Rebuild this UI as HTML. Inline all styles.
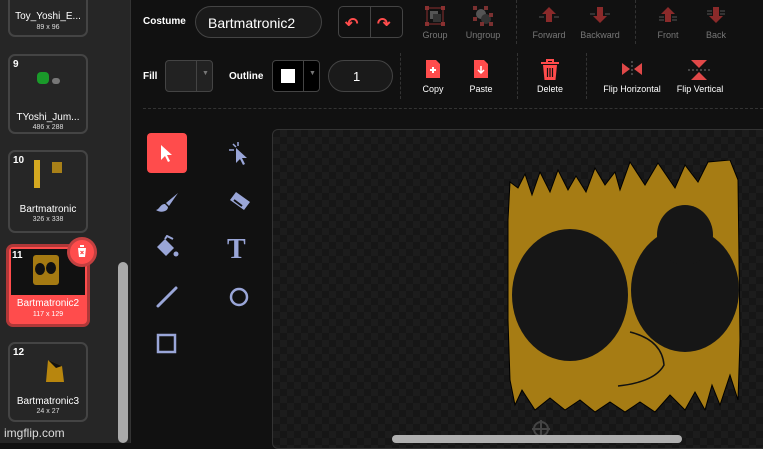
<!DOCTYPE html>
<html><head><meta charset="utf-8"><style>
*{margin:0;padding:0;box-sizing:border-box}
body{width:763px;height:443px;overflow:hidden;background:#111;font-family:"Liberation Sans",sans-serif;position:relative;color:#fff}
.abs{position:absolute}
#side{left:0;top:0;width:131px;height:443px;background:#262626;border-right:1px solid #333}
.card{position:absolute;left:8px;width:80px;border:2px solid #444;border-radius:7px;background:#262626}
.card .n{position:absolute;left:3px;top:3px;font-size:10px;font-weight:bold}
.card .t{position:absolute;width:100%;text-align:center;font-size:10px}
.card .s{position:absolute;width:100%;text-align:center;font-size:7px;color:#ddd}
.lbl{font-size:10px;font-weight:bold;color:#fff}
.btxt{font-size:9px;color:#777;text-align:center;width:60px}
.wtxt{font-size:9px;color:#fff;text-align:center;width:80px}
.vd{border-left:1px dashed #333;width:0}
.checker{background-color:#161616;background-image:linear-gradient(45deg,#1c1c1c 25%,transparent 25%,transparent 75%,#1c1c1c 75%),linear-gradient(45deg,#1c1c1c 25%,transparent 25%,transparent 75%,#1c1c1c 75%);background-size:14px 14px;background-position:0 0,7px 7px}
</style></head><body>
<div id="side" class="abs">
  <div class="card" style="top:-10px;height:47px"><div class="t" style="top:19px">Toy_Yoshi_E...</div><div class="s" style="top:32px">89 x 96</div></div>
  <div class="card" style="top:54px;height:80px"><div class="n">9</div>
    <div class="abs" style="left:27px;top:16px;width:12px;height:12px;background:#1a9a2a;border-radius:4px"></div>
    <div class="abs" style="left:42px;top:22px;width:8px;height:6px;background:#777;border-radius:3px"></div>
    <div class="t" style="top:56px">TYoshi_Jum...</div><div class="s" style="top:68px">486 x 288</div></div>
  <div class="card" style="top:150px;height:83px"><div class="n">10</div>
    <div class="abs" style="left:24px;top:8px;width:6px;height:28px;background:#d4a820"></div>
    <div class="abs" style="left:42px;top:10px;width:10px;height:11px;background:#a88018"></div>
    <div class="t" style="top:52px">Bartmatronic</div><div class="s" style="top:64px">326 x 338</div></div>
  <div class="card" style="top:244px;height:83px;background:#ff4c4c;border:3px solid #b03838;left:6px;width:84px">
    <div class="abs" style="left:2px;top:2px;width:74px;height:46px;background:#111"></div>
    <div class="abs" style="left:24px;top:8px;width:26px;height:30px;background:#a57a12;border-radius:3px"></div>
    <div class="abs" style="left:26px;top:16px;width:10px;height:12px;background:#111;border-radius:50%"></div>
    <div class="abs" style="left:37px;top:15px;width:10px;height:12px;background:#111;border-radius:50%"></div>
    <div class="n">11</div>
    <div class="t" style="top:51px">Bartmatronic2</div><div class="s" style="top:64px;color:#fff">117 x 129</div></div>
  <div class="abs" style="left:67px;top:237px;width:30px;height:30px;border-radius:50%;background:#ff4c4c;border:3px solid #c24040"></div>
  <svg class="abs" style="left:76px;top:244px" width="12" height="14" viewBox="0 0 12 14"><path d="M1 3h10M4 3V1h4v2M2 4h8l-1 9H3z" fill="#fff"/><path d="M4.5 7l3 3M7.5 7l-3 3" stroke="#ff4c4c" stroke-width="1.2"/></svg>
  <div class="card" style="top:342px;height:80px"><div class="n">12</div>
    <svg class="abs" style="left:34px;top:14px" width="22" height="26"><path d="M4 2L18 8L20 24L2 24Z" fill="#b8860e"/><path d="M4 2L18 8L12 10Z" fill="#111"/></svg>
    <div class="t" style="top:52px">Bartmatronic3</div><div class="s" style="top:64px">24 x 27</div></div>
  <div class="abs" style="left:118px;top:262px;width:10px;height:181px;background:#aaa;border-radius:5px"></div>
  <div class="abs" style="left:4px;top:426px;font-size:12px;color:#ddd">imgflip.com</div>
</div>
<div class="abs lbl" style="left:143px;top:16px">Costume</div>
<div class="abs" style="left:195px;top:6px;width:127px;height:32px;border:1px solid #444;border-radius:16px;background:#1a1a1a;font-size:14px;padding:8px 12px">Bartmatronic2</div>
<div class="abs" style="left:338px;top:6px;width:65px;height:32px;border:1px solid #444;border-radius:5px"></div>
<div class="abs" style="left:370px;top:6px;width:1px;height:32px;background:#444"></div>
<div class="abs" style="left:345px;top:14px;color:#ff4c4c;font-size:16px;font-weight:bold">&#x21B6;</div>
<div class="abs" style="left:377px;top:14px;color:#ff4c4c;font-size:16px;font-weight:bold">&#x21B7;</div>
<svg class="abs" style="left:424px;top:5px" width="22" height="22"><rect x="3" y="3" width="16" height="16" fill="none" stroke="#8a3030"/><rect x="6" y="6" width="8" height="8" fill="#555"/><rect x="9" y="9" width="8" height="8" fill="#333"/><g fill="#8a3030"><rect x="1" y="1" width="4" height="4"/><rect x="17" y="1" width="4" height="4"/><rect x="1" y="17" width="4" height="4"/><rect x="17" y="17" width="4" height="4"/></g></svg>
<svg class="abs" style="left:472px;top:5px" width="22" height="22"><circle cx="9" cy="9" r="5" fill="#555"/><circle cx="14" cy="14" r="5" fill="#333"/><g fill="#7a3030"><rect x="1" y="1" width="4" height="4"/><rect x="12" y="1" width="4" height="4"/><rect x="1" y="12" width="4" height="4"/><rect x="17" y="8" width="4" height="4"/><rect x="17" y="17" width="4" height="4"/><rect x="8" y="17" width="4" height="4"/></g></svg>
<div class="abs btxt" style="left:405px;top:30px">Group</div>
<div class="abs btxt" style="left:453px;top:30px">Ungroup</div>
<div class="abs vd" style="left:516px;top:0;height:44px"></div>
<svg class="abs" style="left:538px;top:6px" width="22" height="18"><path d="M11 1L4 8h4v8h6V8h4z" fill="#8a2a2a"/><path d="M1 11h5M16 11h5" stroke="#555"/></svg>
<svg class="abs" style="left:589px;top:6px" width="22" height="18"><path d="M11 17L4 10h4V1h6v9h4z" fill="#8a2a2a"/><path d="M1 8h5M16 8h5" stroke="#555"/></svg>
<div class="abs btxt" style="left:519px;top:30px">Forward</div>
<div class="abs btxt" style="left:570px;top:30px">Backward</div>
<div class="abs vd" style="left:635px;top:0;height:44px"></div>
<svg class="abs" style="left:657px;top:6px" width="22" height="18"><path d="M11 1L4 8h4v8h6V8h4z" fill="#8a2a2a"/><path d="M2 11h5M2 14h5M15 11h5M15 14h5" stroke="#555"/></svg>
<svg class="abs" style="left:705px;top:6px" width="22" height="18"><path d="M11 17L4 10h4V1h6v9h4z" fill="#8a2a2a"/><path d="M2 5h5M2 8h5M15 5h5M15 8h5" stroke="#555"/></svg>
<div class="abs btxt" style="left:638px;top:30px">Front</div>
<div class="abs btxt" style="left:686px;top:30px">Back</div>
<div class="abs lbl" style="left:143px;top:71px">Fill</div>
<div class="abs" style="left:165px;top:60px;width:48px;height:32px;border:1px solid #444;border-radius:4px;background:#222"></div>
<div class="abs" style="left:196px;top:60px;width:1px;height:32px;background:#444"></div>
<div class="abs" style="left:202px;top:70px;font-size:7px;color:#777">▼</div>
<div class="abs lbl" style="left:229px;top:71px">Outline</div>
<div class="abs" style="left:272px;top:60px;width:48px;height:32px;border:1px solid #444;border-radius:4px;background:#000"></div>
<div class="abs" style="left:281px;top:69px;width:14px;height:14px;background:#fff"></div>
<div class="abs" style="left:303px;top:60px;width:1px;height:32px;background:#444"></div>
<div class="abs" style="left:309px;top:70px;font-size:7px;color:#777">▼</div>
<div class="abs" style="left:328px;top:60px;width:65px;height:32px;border:1px solid #444;border-radius:16px;background:#1a1a1a;font-size:13px;padding:8px 0 0 24px">1</div>
<div class="abs vd" style="left:400px;top:53px;height:46px"></div>
<svg class="abs" style="left:425px;top:59px" width="16" height="20"><path d="M1 1h10l4 4v14H1z" fill="#ff4c4c"/><path d="M5 11h6M8 8v6" stroke="#fff" stroke-width="2"/></svg>
<svg class="abs" style="left:473px;top:59px" width="16" height="20"><path d="M1 1h10l4 4v14H1z" fill="#ff4c4c"/><path d="M8 7v7M5 11l3 3 3-3" stroke="#fff" stroke-width="1.5" fill="none"/></svg>
<div class="abs wtxt" style="left:393px;top:84px">Copy</div>
<div class="abs wtxt" style="left:441px;top:84px">Paste</div>
<div class="abs vd" style="left:517px;top:53px;height:46px"></div>
<svg class="abs" style="left:540px;top:59px" width="20" height="22"><path d="M1 4h18M7 4V1h6v3" stroke="#ff4c4c" stroke-width="2" fill="none"/><path d="M3 6h14l-1.5 15h-11z" fill="#ff4c4c"/><path d="M7.5 9v9M10 9v9M12.5 9v9" stroke="#111" stroke-width="1.2"/></svg>
<div class="abs wtxt" style="left:510px;top:84px">Delete</div>
<div class="abs vd" style="left:586px;top:53px;height:46px"></div>
<svg class="abs" style="left:621px;top:61px" width="22" height="16"><path d="M1 2l8 6-8 6z M21 2l-8 6 8 6z" fill="#e04848"/><path d="M11 0v16" stroke="#777" stroke-dasharray="2 2"/></svg>
<svg class="abs" style="left:688px;top:59px" width="22" height="22"><path d="M3 1h16l-8 8z M3 21h16l-8-8z" fill="#e04848"/><path d="M0 11h22" stroke="#777" stroke-dasharray="2 2"/></svg>
<div class="abs wtxt" style="left:592px;top:84px;width:80px">Flip Horizontal</div>
<div class="abs wtxt" style="left:660px;top:84px;width:80px">Flip Vertical</div>
<div class="abs" style="left:143px;top:108px;width:620px;border-top:1px dashed #333"></div>
<div class="abs" style="left:147px;top:133px;width:40px;height:40px;border-radius:4px;background:#ff4c4c"></div>
<svg class="abs" style="left:159px;top:144px" width="16" height="20"><path d="M2 1v15l4-4 3 6 2-1-3-6h5z" fill="#fff"/></svg>
<svg class="abs" style="left:226px;top:140px" width="26" height="26"><path d="M10 8v15l4-4 3 6 2-1-3-6h5z" fill="#9aa6d8"/><path d="M3 10h5M7 4l3 3M12 2v4" stroke="#9aa6d8" stroke-width="1.5"/></svg>
<svg class="abs" style="left:154px;top:191px" width="26" height="24"><path d="M24 2L12 12l3 3z" fill="#9aa6d8"/><path d="M11 13c-5 0-5 5-9 6 4 3 12 2 12-3z" fill="#9aa6d8"/></svg>
<svg class="abs" style="left:226px;top:190px" width="26" height="24"><path d="M10 2l14 10-6 8-14-10z" fill="#9aa6d8"/><path d="M8 10l8 6" stroke="#111" stroke-width="2"/></svg>
<svg class="abs" style="left:154px;top:235px" width="26" height="26"><path d="M3 12l8-8 9 9-8 8z" fill="#9aa6d8"/><path d="M11 4l2-3 6 3" stroke="#9aa6d8" stroke-width="2" fill="none"/><circle cx="22" cy="19" r="2.5" fill="#9aa6d8"/></svg>
<div class="abs" style="left:227px;top:234px;font-family:'Liberation Serif',serif;font-size:28px;font-weight:bold;color:#9aa6d8">T</div>
<svg class="abs" style="left:155px;top:285px" width="24" height="24"><path d="M3 21L21 3" stroke="#9aa6d8" stroke-width="3" stroke-linecap="round"/></svg>
<svg class="abs" style="left:227px;top:285px" width="24" height="24"><circle cx="12" cy="12" r="8" fill="none" stroke="#9aa6d8" stroke-width="2.5"/></svg>
<svg class="abs" style="left:155px;top:332px" width="24" height="24"><rect x="3" y="3" width="17" height="17" fill="none" stroke="#9aa6d8" stroke-width="2.5"/></svg>
<div class="abs checker" style="left:272px;top:129px;width:495px;height:320px;border:1px solid #333;border-radius:6px"></div>
<svg class="abs" style="left:480px;top:160px" width="283" height="283" viewBox="0 0 283 283">
<path d="M30 22 L38 28 L45 14 L52 35 L60 12 L70 32 L78 10 L88 30 L96 16 L106 32 L115 8 L125 25 L135 12 L140 30 L150 2 L165 25 L178 3 L195 28 L205 5 L218 22 L228 2 L250 0 L258 20 L260 180 L258 240 L250 215 L240 245 L232 225 L225 250 L215 232 L205 250 L190 235 L175 252 L160 242 L145 252 L130 242 L115 252 L100 240 L85 250 L70 238 L55 250 L42 230 L35 245 L30 220 L28 160 L28 60 Z" fill="#a67c14" stroke="#000" stroke-width="1"/>
<ellipse cx="90" cy="135" rx="58" ry="66" fill="#161616"/>
<ellipse cx="205" cy="130" rx="54" ry="62" fill="#161616"/>
<ellipse cx="205" cy="75" rx="28" ry="30" fill="#161616"/>
<path d="M138 226 Q175 222 184 205 Q182 180 150 172" fill="none" stroke="#111" stroke-width="1.5"/>
</svg>
<svg class="abs" style="left:530px;top:418px" width="22" height="22"><circle cx="11" cy="11" r="7" fill="none" stroke="#444" stroke-width="2"/><path d="M11 2v18M2 11h18" stroke="#444" stroke-width="2"/></svg>
<div class="abs" style="left:392px;top:435px;width:290px;height:8px;border-radius:4px;background:#b0b0b0"></div>
</body></html>
